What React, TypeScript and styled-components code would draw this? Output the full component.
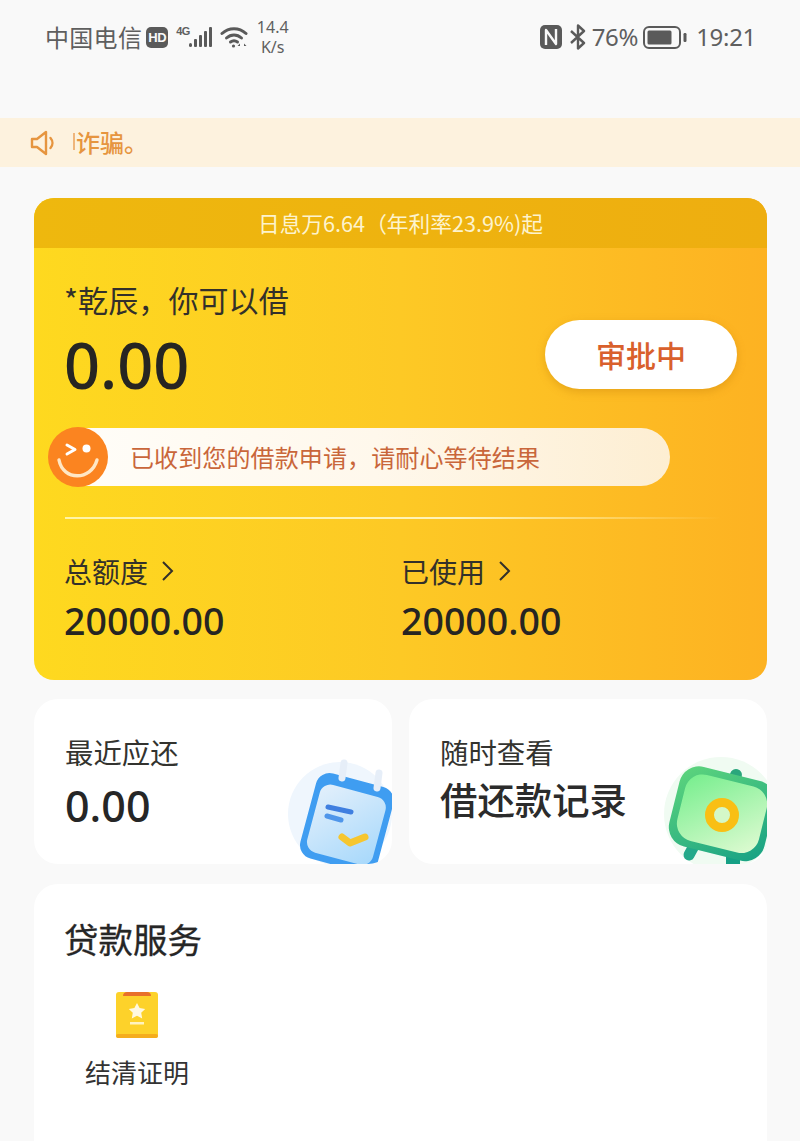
import React from "react";
import styled, { createGlobalStyle } from "styled-components";

const Global = createGlobalStyle`
  html, body { margin: 0; padding: 0; background: #f9f9f9; }
  body { font-family: "Noto Sans", "Noto Sans CJK SC", sans-serif; }
  * { box-sizing: border-box; }
`;
const cjk = `"Noto Sans CJK SC", "Noto Sans", sans-serif`;

const Page = styled.div`
  width: 800px; height: 1141px; overflow: hidden; background: #f9f9f9;
  display: flex; flex-direction: column;
`;
const StatusBar = styled.div`
  height: 118px; flex: none; padding: 18px 44px 0 45px; color: #5f5f5f;
  display: flex; justify-content: space-between; align-items: flex-start;
`;
const StatusGroup = styled.div`
  height: 38px; display: flex; align-items: center;
`;
const Carrier = styled.span`
  font: 400 24px/38px ${cjk}; letter-spacing: 0.3px;
`;
const HdBadge = styled.span`
  width: 22px; height: 21px; margin-left: 4px; border-radius: 5px; background: #5a5a5a; color: #f9f9f9;
  font: 700 13px/21px "Liberation Sans", sans-serif; text-align: center; letter-spacing: -0.5px;
`;
const NetLabel = styled.span`
  margin: -13px 0 0 8px; width: 13px; font: 700 11px/12px "Liberation Sans", sans-serif; letter-spacing: -0.5px;
`;
const Speed = styled.div`
  margin-left: 8px; width: 33px; text-align: center; font: 400 16px/20px "Noto Sans", sans-serif; white-space: nowrap;
  display: flex; flex-direction: column; align-items: center;
`;
const RightText = styled.span<{ $ml: number }>`
  margin-left: ${p => p.$ml}px; font: 400 24px/38px "Noto Sans", sans-serif; letter-spacing: -0.3px;
`;
const StatusIcon = styled.svg<{ $ml?: number }>`
  flex: none; display: block; margin-left: ${p => p.$ml ?? 0}px;
`;

const Notice = styled.div`
  height: 49px; flex: none; background: #fdf2de; padding-left: 30px; display: flex; align-items: center;
  color: #e6953f; font: 500 24px/49px ${cjk};
`;
const NoticeText = styled.span`
  margin-left: 17px; padding-left: 3px; position: relative; top: -1px;
  &::before { content: ""; position: absolute; left: 0; top: 16px; height: 17px; width: 1.5px; background: #efb67c; }
`;

const Main = styled.div`
  padding: 31px 33px 0 34px; display: flex; flex-direction: column; gap: 20px;
`;
const LimitCard = styled.section`
  height: 482px; border-radius: 20px; overflow: hidden; display: flex; flex-direction: column; color: #2b2a27;
  background: linear-gradient(90deg, #fed91f 0%, #fdc925 50%, #fdb222 100%);
`;
const RateStrip = styled.div`
  height: 50px; flex: none; text-align: center; color: #fdf3cd; font: 400 21.7px/50px ${cjk};
  background: linear-gradient(90deg, #eeb80e, #eeae10);
`;
const TopArea = styled.div`
  height: 178px; flex: none; padding: 31px 30px 0 31px; display: flex; justify-content: space-between;
`;
const Name = styled.div`
  font: 400 30px/40px ${cjk}; color: #33302a; margin-left: -1px; letter-spacing: 0.1px;
`;
const Amount = styled.div`
  margin-top: 12px; margin-left: -1px; font: 500 63px/68px "Noto Sans", sans-serif; color: #262522;
`;
const ApproveButton = styled.button`
  width: 192px; height: 69px; margin-top: 41px; border: 0; border-radius: 35px; background: #fff; color: #d9602c;
  font: 500 30px/69px ${cjk}; letter-spacing: 0; padding: 0;
  box-shadow: 0 3px 8px rgba(190, 120, 10, .35);
`;
const ProgressRow = styled.div`
  margin: 2px 0 0 14px; display: flex; align-items: center; height: 58px;
`;
const Smile = styled.svg`
  flex: none; width: 60px; height: 60px; position: relative; z-index: 1; display: block;
`;
const ProgressPill = styled.div`
  width: 590px; height: 58px; margin-left: -28px; padding-left: 50px; border-radius: 0 29px 29px 0;
  background: linear-gradient(90deg, #fffdf8 0%, #fff8ec 50%, #fdeed2 100%);
  color: #c9663a; font: 400 24px/57px ${cjk}; letter-spacing: 0.12px;
`;
const Divider = styled.div`
  height: 2px; margin: 31px 46px 0 31px;
  background: linear-gradient(90deg, #fff4a6 0%, #fff3b8 60%, rgba(255, 240, 170, 0) 100%);
`;
const Stats = styled.div`
  padding: 32px 0 0 30px; display: grid; grid-template-columns: 337px 1fr;
`;
const StatLabel = styled.div`
  display: flex; align-items: center; gap: 13px; font: 400 28px/40px ${cjk}; color: #33302a;
`;
const StatValue = styled.div`
  margin-top: 5px; font: 500 37.5px/50px "Noto Sans", sans-serif; color: #262522;
`;

const TwoCol = styled.div`
  margin-top: -1px; display: grid; grid-template-columns: 358px 358px; gap: 17px;
`;
const MiniCard = styled.div`
  position: relative; height: 165px; overflow: hidden; background: #fff; border-radius: 24px; padding: 33px 0 0 31px;
`;
const MiniLabel = styled.div`
  font: 400 28.4px/40px ${cjk}; color: #33332f;
`;
const MiniValue = styled.div`
  margin-top: 7px; font: 500 43px/54px "Noto Sans", sans-serif; color: #262626;
`;
const MiniTitle = styled.div`
  margin-top: 1px; font: 500 37.4px/52px ${cjk}; color: #2b2b2b; letter-spacing: 0;
`;
const CardArt = styled.svg`
  position: absolute; right: 0; bottom: 0; display: block;
`;

const ServiceCard = styled.section`
  height: 280px; background: #fff; border-radius: 24px; padding: 29px 30px;
`;
const ServiceHeading = styled.div`
  font: 400 34.5px/50px ${cjk}; color: #262626; -webkit-text-stroke: 0.3px #262626;
`;
const ServiceItem = styled.div`
  width: 104px; margin: 28px 0 0 21px; display: flex; flex-direction: column; align-items: center;
`;
const ServiceLabel = styled.div`
  margin-top: 14px; font: 400 26px/38px ${cjk}; color: #333; white-space: nowrap;
`;
const ServiceIcon = styled.svg`
  display: block;
`;

export default function App() {
  const chevron = (
    <svg width="13" height="22" viewBox="0 0 13 22" fill="none" stroke="#33302a" strokeWidth="2"><path d="M2 2l9 9-9 9" /></svg>
  );
  return (
    <Page>
      <Global />
      <StatusBar>
        <StatusGroup>
          <Carrier>中国电信</Carrier>
          <HdBadge>HD</HdBadge>
          <NetLabel>4G</NetLabel>
          <StatusIcon width="24" height="22" viewBox="0 0 24 22" fill="#5a5a5a">
            <rect x="0" y="17" width="3" height="4" rx="1.5" />
            <rect x="5" y="13" width="3" height="8" rx="1" />
            <rect x="10" y="9" width="3" height="12" rx="1" />
            <rect x="15" y="5" width="3" height="16" rx="1" />
            <rect x="20" y="1" width="3" height="20" rx="1" />
          </StatusIcon>
          <StatusIcon $ml={7} width="28" height="24" viewBox="0 0 28 24" fill="none" stroke="#5a5a5a" strokeWidth="3" strokeLinecap="round">
            <path d="M2 8.5C9 2 19 2 26 8.5" />
            <path d="M6.5 13C11 9 17 9 21.5 13" />
            <path d="M10.5 17C12.5 15.5 15.5 15.5 17.5 17" />
            <circle cx="13.5" cy="21" r="1.6" fill="#5a5a5a" stroke="none" />
            <path d="M20 21l-2.5-.1 2.5-2.4zM24 21l2.5-.1-2.5-2.4z" fill="#5a5a5a" stroke="none" />
          </StatusIcon>
          <Speed><span>14.4</span><span>K/s</span></Speed>
        </StatusGroup>
        <StatusGroup>
          <StatusIcon width="22" height="24" viewBox="0 0 22 24">
            <rect x="0" y="0" width="22" height="24" rx="5" fill="#5a5a5a" />
            <path d="M6 20V5l10 14V4" fill="none" stroke="#f9f9f9" strokeWidth="2.4" strokeLinejoin="round" />
          </StatusIcon>
          <StatusIcon $ml={7} width="18" height="26" viewBox="0 0 18 26" fill="none" stroke="#5a5a5a" strokeWidth="2.4" strokeLinejoin="round">
            <path d="M2 7l13 12-6 5.5V1.5L15 7 2 19" />
          </StatusIcon>
          <RightText $ml={5}>76%</RightText>
          <StatusIcon $ml={5} width="44" height="23" viewBox="0 0 44 23">
            <rect x="1" y="1" width="36" height="21" rx="5" fill="none" stroke="#5a5a5a" strokeWidth="2" />
            <rect x="4.5" y="4.5" width="24" height="14" rx="1.5" fill="#5a5a5a" />
            <rect x="40.5" y="7" width="3" height="9" rx="1.2" fill="#5a5a5a" />
          </StatusIcon>
          <RightText $ml={9}>19:21</RightText>
        </StatusGroup>
      </StatusBar>

      <Notice>
        <svg width="26" height="26" viewBox="0 0 26 26" fill="none" stroke="#e6953f" strokeWidth="2.4" strokeLinejoin="round" strokeLinecap="round">
          <path d="M2 9h5l9-7v22l-9-7H2z" />
          <path d="M20.5 8c2.6 3 2.6 7 0 10" />
        </svg>
        <NoticeText>诈骗。</NoticeText>
      </Notice>

      <Main>
        <LimitCard>
          <RateStrip>日息万6.64（年利率23.9%)起</RateStrip>
          <TopArea>
            <div>
              <Name>*乾辰，你可以借</Name>
              <Amount>0.00</Amount>
            </div>
            <ApproveButton>审批中</ApproveButton>
          </TopArea>
          <ProgressRow>
            <Smile viewBox="0 0 60 60">
              <circle cx="30" cy="30" r="30" fill="#fb8420" />
              <path d="M19 18l8 4.5-8 4.5" fill="none" stroke="#fff" strokeWidth="3" strokeLinecap="round" strokeLinejoin="round" />
              <circle cx="38.5" cy="21.5" r="4" fill="#fff" />
              <path d="M11 33c4 21 32 21 38 0" fill="none" stroke="#ffe7c4" strokeWidth="3.4" strokeLinecap="round" />
            </Smile>
            <ProgressPill>已收到您的借款申请，请耐心等待结果</ProgressPill>
          </ProgressRow>
          <Divider />
          <Stats>
            <div>
              <StatLabel>总额度{chevron}</StatLabel>
              <StatValue>20000.00</StatValue>
            </div>
            <div>
              <StatLabel>已使用{chevron}</StatLabel>
              <StatValue>20000.00</StatValue>
            </div>
          </Stats>
        </LimitCard>

        <TwoCol>
          <MiniCard>
            <MiniLabel>最近应还</MiniLabel>
            <MiniValue>0.00</MiniValue>
            <CardArt width="110" height="110" viewBox="0 0 110 110">
              <defs>
                <linearGradient id="calFace" x1="0" y1="0" x2="1" y2="1">
                  <stop offset="0" stopColor="#e4f0fb" /><stop offset="1" stopColor="#a6d8fb" />
                </linearGradient>
              </defs>
              <circle cx="58" cy="60" r="52" fill="#eff6fd" />
              <g transform="rotate(15 65.5 68.5)">
                <rect x="25" y="25" width="80" height="88" rx="14" fill="#3f9df1" />
                <rect x="31" y="36" width="68" height="70" rx="11" fill="url(#calFace)" />
              </g>
              <path d="M62 9l-2 15" stroke="#e6eef8" strokeWidth="7" strokeLinecap="round" />
              <path d="M97 19l-2 15" stroke="#e6eef8" strokeWidth="7" strokeLinecap="round" />
              <path d="M46 53l23 5" stroke="#3f7fe0" strokeWidth="5" strokeLinecap="round" />
              <path d="M45 62l14 4" stroke="#4f96ea" strokeWidth="5" strokeLinecap="round" />
              <path d="M60 83l8 6 15-6" fill="none" stroke="#f6c62f" strokeWidth="7" strokeLinecap="round" strokeLinejoin="round" />
            </CardArt>
          </MiniCard>
          <MiniCard>
            <MiniLabel>随时查看</MiniLabel>
            <MiniTitle>借还款记录</MiniTitle>
            <CardArt width="108" height="108" viewBox="0 0 108 108">
              <defs>
                <linearGradient id="tvBody" x1="0" y1="0" x2="1" y2="1">
                  <stop offset="0" stopColor="#5fd67c" /><stop offset="1" stopColor="#16a085" />
                </linearGradient>
                <linearGradient id="tvFace" x1="0" y1="0" x2="1" y2="1">
                  <stop offset="0" stopColor="#74ee8c" /><stop offset="1" stopColor="#e2fbd4" />
                </linearGradient>
              </defs>
              <circle cx="62" cy="58" r="57" fill="#f0fbf2" />
              <path d="M75 26l2-7" stroke="#2aa67c" strokeWidth="12" strokeLinecap="round" />
              <path d="M36 88l-6 11" stroke="#23a98a" strokeWidth="11" strokeLinecap="round" />
              <rect x="67" y="88" width="14" height="20" fill="#16a085" />
              <g transform="rotate(14 64 58)">
                <rect x="14" y="17" width="98" height="82" rx="20" fill="url(#tvBody)" />
                <rect x="21" y="24" width="84" height="68" rx="18" fill="url(#tvFace)" />
              </g>
              <circle cx="63" cy="59" r="12.5" fill="#d4f8c8" stroke="#f9bf14" strokeWidth="9" />
            </CardArt>
          </MiniCard>
        </TwoCol>

        <ServiceCard>
          <ServiceHeading>贷款服务</ServiceHeading>
          <ServiceItem>
            <ServiceIcon width="44" height="48" viewBox="0 0 44 48">
              <rect x="1" y="1" width="42" height="46" rx="3" fill="#fdd22a" />
              <rect x="1" y="43" width="42" height="4" rx="2" fill="#f5ad1d" />
              <path d="M8 5c0-3 2-4 4-4h20c2 0 4 1 4 4z" fill="#e8702a" />
              <path d="M22 12l2.6 5 5.6.9-4 3.9 1 5.6-5.2-2.7-5.2 2.7 1-5.6-4-3.9 5.6-.9z" fill="#fff8e0" />
              <rect x="15" y="31" width="14" height="2.5" fill="#fff3c0" />
            </ServiceIcon>
            <ServiceLabel>结清证明</ServiceLabel>
          </ServiceItem>
        </ServiceCard>
      </Main>
    </Page>
  );
}
